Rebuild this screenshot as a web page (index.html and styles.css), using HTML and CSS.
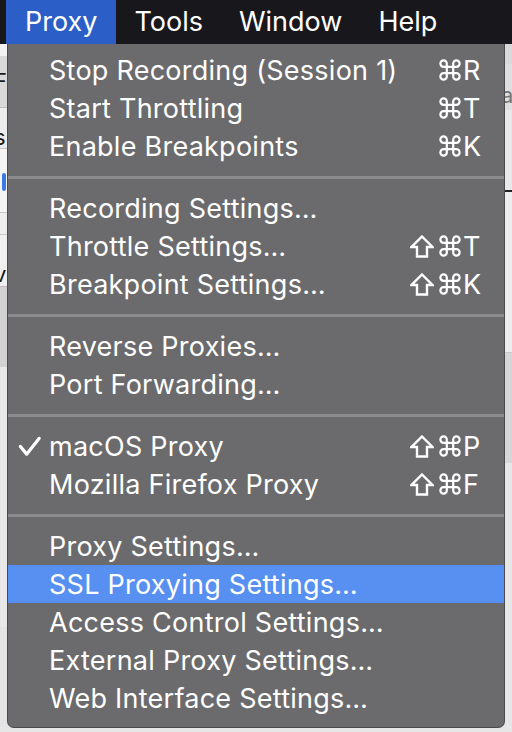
FILE: index.html
```html
<!DOCTYPE html>
<html>
<head>
<meta charset="utf-8">
<link rel="stylesheet" href="styles.css">
</head>
<body>
<div class="screen">
  <div class="menubar">
    <div class="mb-item active">Proxy</div>
    <div class="mb-item">Tools</div>
    <div class="mb-item">Window</div>
    <div class="mb-item">Help</div>
  </div>
  <div class="backdrop">
    <div class="bg-left">
      <div class="bl b1"></div>
      <div class="bl b2"><span class="cut">F</span></div>
      <div class="bl b3"><span class="cut">s</span></div>
      <div class="bl b4"><span class="blue-bit"></span></div>
      <div class="bl b5"></div>
      <div class="bl b6"><span class="cut">v</span></div>
      <div class="bl b7"></div>
      <div class="bl b8"></div>
      <div class="bl b9"></div>
    </div>
    <div class="bg-mid"></div>
    <div class="bg-right">
      <div class="br r1"></div>
      <div class="br r2"><span class="cut">a</span></div>
      <div class="br r3"></div>
      <div class="br r4"></div>
      <div class="br r5"></div>
      <div class="br r6"></div>
    </div>
  </div>
  <div class="menu">
    <div class="item"><span class="check"></span><span class="label">Stop Recording (Session 1)</span><span class="mods"><svg class="cmd" viewBox="-1.5 -1.5 24 24"><path d="M7 7V3.5A3.5 3.5 0 1 0 3.5 7H17.5A3.5 3.5 0 1 0 14 3.5V17.5A3.5 3.5 0 1 0 17.5 14H3.5A3.5 3.5 0 1 0 7 17.5Z"/></svg></span><span class="key">R</span></div>
    <div class="item"><span class="check"></span><span class="label">Start Throttling</span><span class="mods"><svg class="cmd" viewBox="-1.5 -1.5 24 24"><path d="M7 7V3.5A3.5 3.5 0 1 0 3.5 7H17.5A3.5 3.5 0 1 0 14 3.5V17.5A3.5 3.5 0 1 0 17.5 14H3.5A3.5 3.5 0 1 0 7 17.5Z"/></svg></span><span class="key">T</span></div>
    <div class="item"><span class="check"></span><span class="label">Enable Breakpoints</span><span class="mods"><svg class="cmd" viewBox="-1.5 -1.5 24 24"><path d="M7 7V3.5A3.5 3.5 0 1 0 3.5 7H17.5A3.5 3.5 0 1 0 14 3.5V17.5A3.5 3.5 0 1 0 17.5 14H3.5A3.5 3.5 0 1 0 7 17.5Z"/></svg></span><span class="key">K</span></div>
    <div class="sep"></div>
    <div class="item"><span class="check"></span><span class="label">Recording Settings…</span><span class="mods"></span><span class="key"></span></div>
    <div class="item"><span class="check"></span><span class="label">Throttle Settings…</span><span class="mods"><svg class="shift" viewBox="0 0 24 23"><path d="M12 1.5L22.5 12H17V21.5H7V12H1.5Z"/></svg><svg class="cmd" viewBox="-1.5 -1.5 24 24"><path d="M7 7V3.5A3.5 3.5 0 1 0 3.5 7H17.5A3.5 3.5 0 1 0 14 3.5V17.5A3.5 3.5 0 1 0 17.5 14H3.5A3.5 3.5 0 1 0 7 17.5Z"/></svg></span><span class="key">T</span></div>
    <div class="item"><span class="check"></span><span class="label">Breakpoint Settings…</span><span class="mods"><svg class="shift" viewBox="0 0 24 23"><path d="M12 1.5L22.5 12H17V21.5H7V12H1.5Z"/></svg><svg class="cmd" viewBox="-1.5 -1.5 24 24"><path d="M7 7V3.5A3.5 3.5 0 1 0 3.5 7H17.5A3.5 3.5 0 1 0 14 3.5V17.5A3.5 3.5 0 1 0 17.5 14H3.5A3.5 3.5 0 1 0 7 17.5Z"/></svg></span><span class="key">K</span></div>
    <div class="sep"></div>
    <div class="item"><span class="check"></span><span class="label">Reverse Proxies…</span><span class="mods"></span><span class="key"></span></div>
    <div class="item"><span class="check"></span><span class="label">Port Forwarding…</span><span class="mods"></span><span class="key"></span></div>
    <div class="sep"></div>
    <div class="item"><span class="check"><svg class="tick" viewBox="0 0 24 22"><path d="M2.5 11L9 19L22 2.5"/></svg></span><span class="label">macOS Proxy</span><span class="mods"><svg class="shift" viewBox="0 0 24 23"><path d="M12 1.5L22.5 12H17V21.5H7V12H1.5Z"/></svg><svg class="cmd" viewBox="-1.5 -1.5 24 24"><path d="M7 7V3.5A3.5 3.5 0 1 0 3.5 7H17.5A3.5 3.5 0 1 0 14 3.5V17.5A3.5 3.5 0 1 0 17.5 14H3.5A3.5 3.5 0 1 0 7 17.5Z"/></svg></span><span class="key">P</span></div>
    <div class="item"><span class="check"></span><span class="label">Mozilla Firefox Proxy</span><span class="mods"><svg class="shift" viewBox="0 0 24 23"><path d="M12 1.5L22.5 12H17V21.5H7V12H1.5Z"/></svg><svg class="cmd" viewBox="-1.5 -1.5 24 24"><path d="M7 7V3.5A3.5 3.5 0 1 0 3.5 7H17.5A3.5 3.5 0 1 0 14 3.5V17.5A3.5 3.5 0 1 0 17.5 14H3.5A3.5 3.5 0 1 0 7 17.5Z"/></svg></span><span class="key">F</span></div>
    <div class="sep"></div>
    <div class="item"><span class="check"></span><span class="label">Proxy Settings…</span><span class="mods"></span><span class="key"></span></div>
    <div class="item selected"><span class="check"></span><span class="label">SSL Proxying Settings…</span><span class="mods"></span><span class="key"></span></div>
    <div class="item"><span class="check"></span><span class="label">Access Control Settings…</span><span class="mods"></span><span class="key"></span></div>
    <div class="item"><span class="check"></span><span class="label">External Proxy Settings…</span><span class="mods"></span><span class="key"></span></div>
    <div class="item"><span class="check"></span><span class="label">Web Interface Settings…</span><span class="mods"></span><span class="key"></span></div>
  </div>
</div>
</body>
</html>
```

FILE: styles.css
```css
html, body {
  margin: 0;
  padding: 0;
}
body {
  width: 512px;
  height: 732px;
  overflow: hidden;
  font-family: "Inter", "Liberation Sans", sans-serif;
}
.screen {
  position: relative;
  width: 512px;
  height: 732px;
  background: #e6e6e6;
  display: flex;
  flex-direction: column;
}
.menubar {
  height: 44px;
  background: #18181c;
  display: flex;
  align-items: stretch;
  padding-left: 6px;
  flex: none;
}
.mb-item {
  color: #ffffff;
  font-size: 27px;
  padding: 0 18px 1px 18px;
  display: flex;
  align-items: center;
}
.mb-item.active {
  background: #2b5ec6;
  padding: 0 19px 1px 19px;
}
.backdrop {
  flex: 1;
  display: flex;
}
.bg-left {
  width: 8px;
  display: flex;
  flex-direction: column;
  overflow: hidden;
}
.bg-mid { flex: 1; }
.bg-right {
  width: 8px;
  display: flex;
  flex-direction: column;
  overflow: hidden;
}
.bl, .br {
  flex: none;
  overflow: hidden;
  font-size: 22px;
  color: #1a1a1a;
  line-height: 1;
}
.cut {
  display: block;
  margin-left: -6px;
}
.b1 { height: 12px; background: #f2f2f2; }
.b2 { height: 52px; background: #d9d9d9; border-bottom: 1px solid #bdbdbd; padding-top: 14px; box-sizing: border-box; }
.b3 { height: 41px; background: #ececec; border-bottom: 1px solid #c4c4c4; padding-top: 18px; box-sizing: border-box; }
.b4 { height: 64px; background: #f4f4f4; border-bottom: 1px solid #c8c8c8; padding-top: 24px; box-sizing: border-box; }
.b5 { height: 21px; background: #eeeeee; border-bottom: 1px solid #c8c8c8; }
.b6 { height: 52px; background: #f0f0f0; border-bottom: 1px solid #bdbdbd; padding-top: 28px; box-sizing: border-box; }
.b7 { height: 80px; background: #d2d2d2; }
.b8 { height: 260px; background: #e8e8e8; }
.b9 { height: 100px; background: #e4e4e4; }
.blue-bit {
  display: block;
  width: 4px;
  height: 18px;
  margin-left: 2px;
  background: #3c78df;
  border-radius: 2px;
}
.r1 { height: 20px; background: #d8d8d8; }
.r2 { height: 46px; background: #dedede; color: #777; padding-top: 20px; box-sizing: border-box; }
.r2 .cut { margin-left: -3px; }
.r3 { height: 80px; background: #e8e8e8; border-bottom: 2px solid #222; }
.r4 { height: 160px; background: #ececec; border-bottom: 1px solid #c8c8c8; }
.r5 { height: 110px; background: #d6d6d6; }
.r6 { height: 270px; background: #e6e6e6; }
.menu {
  position: absolute;
  left: 7px;
  top: 44px;
  width: 498px;
  height: 684px;
  box-sizing: border-box;
  background: #6b6b6d;
  border: 1px solid #4a4a4c;
  border-top: none;
  border-radius: 0 0 7px 7px;
  padding: 7px 0 10px;
  display: flex;
  flex-direction: column;
  color: #ffffff;
  font-size: 27px;
  letter-spacing: 0.25px;
}
.item {
  height: 38px;
  flex: none;
  display: flex;
  align-items: center;
}
.item.selected {
  background: #5790f1;
}
.check {
  width: 40px;
  flex: none;
  display: flex;
  align-items: center;
  justify-content: flex-start;
  padding-left: 10px;
  box-sizing: border-box;
}
.tick {
  width: 23px;
  height: 21px;
  fill: none;
  stroke: #ffffff;
  stroke-width: 3.4;
  stroke-linecap: round;
  stroke-linejoin: round;
}
.label {
  flex: 1;
  white-space: nowrap;
  padding-left: 1px;
}
.mods {
  display: flex;
  align-items: center;
  justify-content: flex-end;
  gap: 5px;
  padding-right: 2px;
}
.cmd {
  width: 22px;
  height: 22px;
  fill: none;
  stroke: #ffffff;
  stroke-width: 2.4;
}
.shift {
  width: 24px;
  height: 23px;
  fill: none;
  stroke: #ffffff;
  stroke-width: 2.4;
  stroke-linejoin: miter;
}
.key {
  width: 41px;
  flex: none;
}
.sep {
  height: 24px;
  flex: none;
  display: flex;
  align-items: center;
}
.sep::before {
  content: "";
  display: block;
  width: 100%;
  height: 3px;
  background: #8c8c8e;
}
```
